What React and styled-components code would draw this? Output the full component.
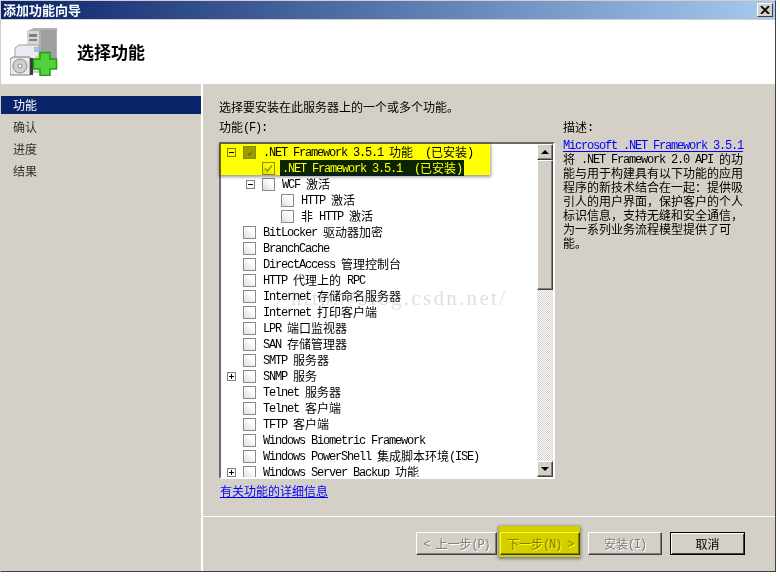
// App.jsx
import React from 'react';
import styled, { createGlobalStyle } from 'styled-components';

const GlobalStyle = createGlobalStyle`
  html, body {
    margin: 0;
    padding: 0;
    background: #fff;
  }
  body {
    font-family: "Noto Sans CJK SC", sans-serif;
    font-size: 12px;
    color: #000;
  }
`;

const Window = styled.div`
  box-sizing: border-box;
  width: 776px;
  height: 572px;
  display: flex;
  flex-direction: column;
  background: #d4d0c8;
  border-top: 1px solid #d4d0c8;
  border-left: 1px solid #d4d0c8;
  border-right: 1px solid #404040;
  border-bottom: 1px solid #404040;
`;

const TitleBar = styled.div`
  box-sizing: border-box;
  height: 19px;
  flex: none;
  display: flex;
  align-items: center;
  justify-content: space-between;
  padding: 0 2px 1px 2px;
  background: linear-gradient(to right, #0a246a, #a6caf0);
  border-bottom: 1px solid #d4d0c8;
`;

const TitleText = styled.span`
  font-size: 13px;
  font-weight: 700;
  line-height: 16px;
  color: #fff;
`;

const CloseButton = styled.button`
  box-sizing: border-box;
  width: 16px;
  height: 14px;
  padding: 0;
  display: flex;
  align-items: center;
  justify-content: center;
  background: #d4d0c8;
  border: 1px solid;
  border-color: #fff #404040 #404040 #fff;
`;

const Header = styled.div`
  box-sizing: border-box;
  height: 64px;
  flex: none;
  display: flex;
  align-items: center;
  gap: 19px;
  padding: 0 0 0 9px;
  background: #fff;
`;

const HeaderTitle = styled.h1`
  margin: 0;
  font-size: 17px;
  font-weight: 700;
  line-height: 20px;
`;

const Main = styled.div`
  flex: 1;
  min-height: 0;
  display: flex;
`;

const Nav = styled.nav`
  box-sizing: border-box;
  width: 202px;
  flex: none;
  display: flex;
  flex-direction: column;
  gap: 4px;
  padding-top: 12px;
  border-right: 2px solid #fff;
`;

const NavItem = styled.div`
  height: 18px;
  padding-left: 12px;
  line-height: 18px;
  color: ${(p) => (p.$active ? '#fff' : '#303030')};
  background: ${(p) => (p.$active ? '#0a246a' : 'transparent')};
`;

const Content = styled.div`
  flex: 1;
  min-width: 0;
  display: flex;
  flex-direction: column;
`;

const Body = styled.div`
  flex: 1;
  padding: 16px 0 0 16px;
`;

// SimSun has 6px latin next to 12px hanzi; the hanzi stay the line's strut
const Latin = styled.span`
  font-family: "Liberation Mono", monospace;
  font-size: 12px;
  letter-spacing: -1.2px;
  line-height: 1;
  vertical-align: 1px;
`;

const Line = styled.div`
  height: 14px;
  line-height: 14px;
  white-space: pre;
`;

const Columns = styled.div`
  display: grid;
  grid-template-columns: 336px 1fr;
  column-gap: 8px;
  margin-top: 6px;
`;

const Column = styled.div`
  display: flex;
  flex-direction: column;
`;

const ListWrap = styled.div`
  position: relative;
  margin-top: 8px;
`;

const List = styled.div`
  box-sizing: border-box;
  height: 337px;
  display: flex;
  overflow: hidden;
  background: #fff;
  border: 2px solid;
  border-color: #6a6a6a #fff #fff #6a6a6a;
`;

const Rows = styled.div`
  flex: 1;
  min-width: 0;
  overflow: hidden;
`;

const Row = styled.div`
  height: 16px;
  display: flex;
  align-items: center;
  padding-left: ${(p) => 6 + p.$level * 19}px;
`;

const ExpanderSlot = styled.div`
  width: 16px;
  flex: none;
  display: flex;
  align-items: center;
`;

const Expander = styled.div`
  position: relative;
  box-sizing: border-box;
  width: 9px;
  height: 9px;
  border: 1px solid #808080;
  background: #fff;
  &::before {
    content: '';
    position: absolute;
    left: 1px;
    top: 3px;
    width: 5px;
    height: 1px;
    background: #000;
  }
  &::after {
    content: '';
    display: ${(p) => (p.$open ? 'none' : 'block')};
    position: absolute;
    left: 3px;
    top: 1px;
    width: 1px;
    height: 5px;
    background: #000;
  }
`;

const Checkbox = styled.div`
  box-sizing: border-box;
  width: 13px;
  height: 13px;
  flex: none;
  margin-right: 7px;
  display: flex;
  align-items: center;
  justify-content: center;
  border: 1px solid #8a8a8a;
  background: ${(p) =>
    p.$state === 'mixed'
      ? '#9c9c9c'
      : 'linear-gradient(45deg, #dcdcd8 0%, #f2f2f0 45%, #fff 70%)'};
`;

const RowLabel = styled.span`
  height: 16px;
  line-height: 15px;
  white-space: pre;
  padding: 0 2px;
  margin-left: -2px;
  color: ${(p) => (p.$selected ? '#fff' : '#000')};
  background: ${(p) => (p.$selected ? '#0a246a' : 'transparent')};
`;

const Scrollbar = styled.div`
  width: 16px;
  flex: none;
  display: flex;
  flex-direction: column;
  background: repeating-conic-gradient(#d4d0c8 0 25%, #fff 0 50%) 0 0 / 2px 2px;
`;

const RaisedPart = styled.div`
  box-sizing: border-box;
  width: 16px;
  height: ${(p) => p.$height}px;
  flex: none;
  display: flex;
  align-items: center;
  justify-content: center;
  background: #d4d0c8;
  border: 1px solid;
  border-color: #fff #404040 #404040 #fff;
  box-shadow: inset -1px -1px 0 #808080;
`;

const TrackFill = styled.div`
  flex: 1;
`;

const Arrow = styled.div`
  width: 0;
  height: 0;
  border-left: 4px solid transparent;
  border-right: 4px solid transparent;
  border-bottom: ${(p) => (p.$down ? '0' : '4px solid #000')};
  border-top: ${(p) => (p.$down ? '4px solid #000' : '0')};
`;

// yellow marker drawn on the screenshot afterwards, multiply keeps what is under it
const Highlight = styled.div`
  position: absolute;
  left: ${(p) => p.$left}px;
  top: ${(p) => p.$top}px;
  width: ${(p) => p.$width}px;
  height: ${(p) => p.$height}px;
  background: #ffff00;
  mix-blend-mode: multiply;
  box-shadow: 0 1px 3px 1px #9a9a9a;
  pointer-events: none;
`;

const Watermark = styled.div`
  position: absolute;
  left: 72px;
  top: 144px;
  font-family: "Liberation Serif", serif;
  font-size: 21px;
  line-height: 24px;
  letter-spacing: 2.3px;
  color: rgba(120, 120, 120, 0.24);
  white-space: pre;
  pointer-events: none;
`;

const BlueLink = styled.a`
  display: block;
  width: fit-content;
  height: 14px;
  line-height: 14px;
  color: #0000ff;
  text-decoration: underline;
  white-space: pre;
`;

const MoreLink = styled(BlueLink)`
  margin: 5px 0 0 1px;
`;

const DescLink = styled(BlueLink)`
  margin-top: 4px;
`;

const Footer = styled.div`
  flex: none;
  display: flex;
  justify-content: flex-end;
  gap: 8px;
  padding: 15px 30px 16px 0;
  border-top: 1px solid #fff;
`;

const BackNext = styled.div`
  display: flex;
  gap: 3px;
`;

const MarkedButton = styled.div`
  position: relative;
`;

const Button = styled.button`
  box-sizing: border-box;
  width: ${(p) => p.$width}px;
  height: 23px;
  padding: 0;
  font-family: "Noto Sans CJK SC", sans-serif;
  font-size: 12px;
  line-height: 19px;
  white-space: pre;
  background: #d4d0c8;
  color: ${(p) => (p.disabled ? '#808080' : '#000')};
  text-shadow: ${(p) => (p.disabled ? '1px 1px 0 #fff' : 'none')};
  border: 1px solid;
  border-color: ${(p) => (p.$default ? '#000' : '#fff #404040 #404040 #fff')};
  box-shadow: ${(p) =>
    p.$default
      ? 'inset 1px 1px 0 #fff, inset -1px -1px 0 #404040'
      : 'inset -1px -1px 0 #808080'};
`;

const Mixed = ({ text }) =>
  text
    .split(/([\u3000-\u9fff\uff00-\uffef]+)/)
    .map((part, i) => (i % 2 || !part ? part : <Latin key={i}>{part}</Latin>));

const rows = [
  { level: 0, expander: 'open', state: 'mixed', text: '.NET Framework 3.5.1 功能  (已安装)' },
  { level: 1, state: 'checked', text: '.NET Framework 3.5.1  (已安装)', selected: true },
  { level: 1, expander: 'open', text: 'WCF 激活' },
  { level: 2, text: 'HTTP 激活' },
  { level: 2, text: '非 HTTP 激活' },
  { level: 0, text: 'BitLocker 驱动器加密' },
  { level: 0, text: 'BranchCache' },
  { level: 0, text: 'DirectAccess 管理控制台' },
  { level: 0, text: 'HTTP 代理上的 RPC' },
  { level: 0, text: 'Internet 存储命名服务器' },
  { level: 0, text: 'Internet 打印客户端' },
  { level: 0, text: 'LPR 端口监视器' },
  { level: 0, text: 'SAN 存储管理器' },
  { level: 0, text: 'SMTP 服务器' },
  { level: 0, expander: 'closed', text: 'SNMP 服务' },
  { level: 0, text: 'Telnet 服务器' },
  { level: 0, text: 'Telnet 客户端' },
  { level: 0, text: 'TFTP 客户端' },
  { level: 0, text: 'Windows Biometric Framework' },
  { level: 0, text: 'Windows PowerShell 集成脚本环境(ISE)' },
  { level: 0, expander: 'closed', text: 'Windows Server Backup 功能' },
];

const descLines = [
  '将 .NET Framework 2.0 API 的功',
  '能与用于构建具有以下功能的应用',
  '程序的新技术结合在一起：提供吸',
  '引人的用户界面，保护客户的个人',
  '标识信息，支持无缝和安全通信，',
  '为一系列业务流程模型提供了可',
  '能。',
];

const WizardIcon = () => (
  <svg width="48" height="48" viewBox="0 0 48 48">
    <path d="M17 3 L24 0 H47 V35 H17 Z" fill="#b0b0b0" />
    <path d="M17 3 H29 V35 H17 Z" fill="#d6d6d6" />
    <path d="M19 6 H27 V9 H19 Z M19 11 H27 V13 H19 Z" fill="#808080" />
    <path d="M31 2 H46 V30 H31 Z" fill="#a0a0a0" />
    <path d="M5 20 L9 17 H29 V44 H5 Z" fill="#e8ecf2" stroke="#a0a0a0" />
    <path d="M24 19 H29 V24 H24 Z" fill="#9cc0e8" />
    <path d="M0 31 L3 29 H20 V47 H0 Z" fill="#ececec" stroke="#7c7c7c" />
    <circle cx="10" cy="38" r="7" fill="#d0d0d0" stroke="#8a8a8a" />
    <circle cx="10" cy="38" r="2" fill="#fff" stroke="#8a8a8a" />
    <path d="M20 30 H23 V47 H20 Z" fill="#3a3a3a" />
    <path d="M26 28 L30 27 V33 H26 Z" fill="#e6cf3a" />
    <path
      d="M30 24.5 H40 V31 H46.5 V41 H40 V47.5 H30 V41 H23.5 V31 H30 Z"
      fill="#52d13c"
      stroke="#1f9e12"
      strokeWidth="1.5"
    />
  </svg>
);

const CheckMark = () => (
  <svg width="9" height="9" viewBox="0 0 9 9">
    <path d="M1 4.5 L3.5 7 L8 1.5" fill="none" stroke="#9a9a9a" strokeWidth="1.6" />
  </svg>
);

const MixedMark = () => (
  <svg width="9" height="9" viewBox="0 0 9 9">
    <path d="M3 5.5 L4.5 7 L7 3.5" fill="none" stroke="#6a6a6a" strokeWidth="1.2" />
  </svg>
);

const App = () => {
  return (
    <>
      <GlobalStyle />
      <Window>
        <TitleBar>
          <TitleText>添加功能向导</TitleText>
          <CloseButton aria-label="关闭">
            <svg width="10" height="8" viewBox="0 0 10 8">
              <path d="M1 0 L9 8 M9 0 L1 8" stroke="#000" strokeWidth="1.8" />
            </svg>
          </CloseButton>
        </TitleBar>
        <Header>
          <WizardIcon />
          <HeaderTitle>选择功能</HeaderTitle>
        </Header>
        <Main>
          <Nav>
            <NavItem $active>功能</NavItem>
            <NavItem>确认</NavItem>
            <NavItem>进度</NavItem>
            <NavItem>结果</NavItem>
          </Nav>
          <Content>
            <Body>
              <Line><Mixed text="选择要安装在此服务器上的一个或多个功能。" /></Line>
              <Columns>
                <Column>
                  <Line><Mixed text="功能(F):" /></Line>
                  <ListWrap>
                    <List>
                      <Rows>
                        {rows.map((row) => (
                          <Row key={row.text} $level={row.level}>
                            <ExpanderSlot>
                              {row.expander && <Expander $open={row.expander === 'open'} />}
                            </ExpanderSlot>
                            <Checkbox $state={row.state}>
                              {row.state === 'checked' && <CheckMark />}
                              {row.state === 'mixed' && <MixedMark />}
                            </Checkbox>
                            <RowLabel $selected={row.selected}>
                              <Mixed text={row.text} />
                            </RowLabel>
                          </Row>
                        ))}
                      </Rows>
                      <Scrollbar>
                        <RaisedPart $height={16}><Arrow /></RaisedPart>
                        <RaisedPart $height={130} />
                        <TrackFill />
                        <RaisedPart $height={16}><Arrow $down /></RaisedPart>
                      </Scrollbar>
                    </List>
                    <Watermark>http://blog.csdn.net/</Watermark>
                    <Highlight $left={1} $top={2} $width={270} $height={31} />
                  </ListWrap>
                  <MoreLink href="#"><Mixed text="有关功能的详细信息" /></MoreLink>
                </Column>
                <Column>
                  <Line><Mixed text="描述:" /></Line>
                  <DescLink href="#"><Mixed text="Microsoft .NET Framework 3.5.1" /></DescLink>
                  {descLines.map((line) => (
                    <Line key={line}><Mixed text={line} /></Line>
                  ))}
                </Column>
              </Columns>
            </Body>
            <Footer>
              <BackNext>
                <Button disabled $width={81}><Mixed text="< 上一步(P)" /></Button>
                <MarkedButton>
                  <Button disabled $width={80}><Mixed text="下一步(N) >" /></Button>
                  <Highlight $left={-1} $top={-6} $width={81} $height={31} />
                </MarkedButton>
              </BackNext>
              <Button disabled $width={74}><Mixed text="安装(I)" /></Button>
              <Button $default $width={75}>取消</Button>
            </Footer>
          </Content>
        </Main>
      </Window>
    </>
  );
};

export default App;
